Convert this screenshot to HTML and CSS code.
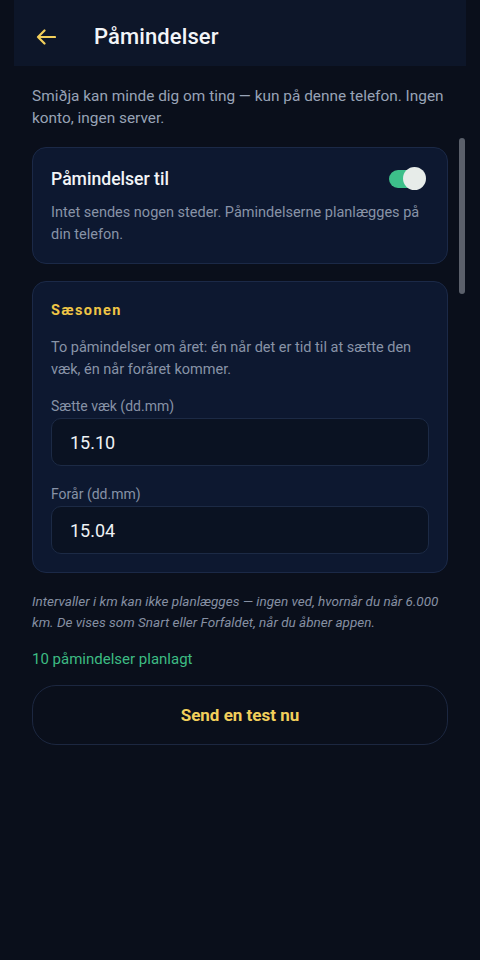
FILE: index.html
```html
<!DOCTYPE html>
<html lang="da">
<head>
<meta charset="utf-8">
<link rel="stylesheet" href="styles.css">
</head>
<body>
<div class="app">
  <header class="topbar">
    <svg class="back" width="20" height="16" viewBox="0 0 20 16"><path d="M19 8H2M8.5 1.5L2 8l6.5 6.5" fill="none" stroke="#f2cf5b" stroke-width="2.2" stroke-linecap="round" stroke-linejoin="round"/></svg>
    <h1 class="title">Påmindelser</h1>
  </header>
  <main class="content">
    <p class="intro">Smiðja kan minde dig om ting — kun på denne telefon. Ingen konto, ingen server.</p>
    <section class="card">
      <div class="row">
        <h2 class="card-title">Påmindelser til</h2>
        <span class="toggle"><span class="knob"></span></span>
      </div>
      <p class="desc">Intet sendes nogen steder. Påmindelserne planlægges på din telefon.</p>
    </section>
    <section class="card season">
      <h3 class="section-title">Sæsonen</h3>
      <p class="desc">To påmindelser om året: én når det er tid til at sætte den væk, én når foråret kommer.</p>
      <label class="label">Sætte væk (dd.mm)</label>
      <div class="input">15.10</div>
      <label class="label">Forår (dd.mm)</label>
      <div class="input">15.04</div>
    </section>
    <p class="note">Intervaller i km kan ikke planlægges — ingen ved, hvornår du når 6.000 km. De vises som Snart eller Forfaldet, når du åbner appen.</p>
    <p class="status">10 påmindelser planlagt</p>
    <button class="btn">Send en test nu</button>
  </main>
  <div class="scrollbar"></div>
</div>
</body>
</html>
```
FILE: styles.css
```css
* { box-sizing: border-box; }
html, body { margin: 0; padding: 0; }
body {
  background: #0a0f1b;
  font-family: Roboto, "Noto Sans", sans-serif;
  color: #e9edf3;
  width: 480px;
  height: 960px;
  overflow: hidden;
}
.app { position: relative; height: 960px; }
.topbar {
  margin: 0 14px;
  height: 66px;
  background: #0d1629;
  display: flex;
  align-items: center;
  padding: 6px 0 0 22px;
  gap: 38px;
}
.back { display: block; margin-top: 1px; }
.title {
  margin: 0;
  font-size: 22px;
  font-weight: 500;
  color: #f3f5f8;
  letter-spacing: 0.1px;
}
.content { padding: 19px 32px 0 32px; }
.intro {
  margin: 0 0 18px;
  font-size: 15.4px;
  line-height: 22px;
  color: #98a3b6;
}
.card {
  background: #0d1830;
  border: 1px solid #1b2947;
  border-radius: 14px;
  padding: 21px 18px 18px;
}
.row { display: flex; align-items: center; justify-content: space-between; }
.card-title {
  margin: 0;
  font-size: 17.6px;
  font-weight: 500;
  color: #f2f4f7;
}
.toggle {
  position: relative;
  width: 36px;
  height: 18px;
  border-radius: 9px;
  background: #3dbf8a;
  margin-right: 4px;
}
.knob {
  position: absolute;
  right: -1px;
  top: -3px;
  width: 23px;
  height: 23px;
  border-radius: 50%;
  background: #e7ece9;
}
.desc {
  margin: 13px 0 0;
  font-size: 14.5px;
  line-height: 21.5px;
  color: #8893a7;
}
.season { margin-top: 17px; padding-top: 20px; padding-bottom: 18px; }
.section-title {
  margin: 0;
  font-size: 14.5px;
  font-weight: 700;
  letter-spacing: 1.4px;
  color: #efc546;
}
.season .desc { margin-top: 18px; }
.label {
  display: block;
  margin: 18px 0 4px;
  font-size: 14px;
  color: #8792a6;
}
.input + .label { margin-top: 20px; }
.input {
  height: 48px;
  background: #0a1222;
  border: 1px solid #1c2a45;
  border-radius: 10px;
  padding: 0 18px;
  display: flex;
  align-items: center;
  font-size: 18px;
  color: #eef1f5;
}
.note {
  margin: 18px 0 0;
  font-size: 13.5px;
  line-height: 21px;
  font-style: italic;
  color: #8690a3;
}
.status {
  margin: 17px 0 0;
  font-size: 15px;
  color: #3dbb83;
}
.btn {
  margin-top: 17px;
  width: 100%;
  height: 60px;
  border-radius: 24px;
  background: transparent;
  border: 1px solid #1c2740;
  color: #f2cf5b;
  font-family: Roboto, "Noto Sans", sans-serif;
  font-size: 17px;
  font-weight: 700;
}
.scrollbar {
  position: absolute;
  left: 459px;
  top: 138px;
  width: 6px;
  height: 156px;
  border-radius: 3px;
  background: #5b606b;
}
```
